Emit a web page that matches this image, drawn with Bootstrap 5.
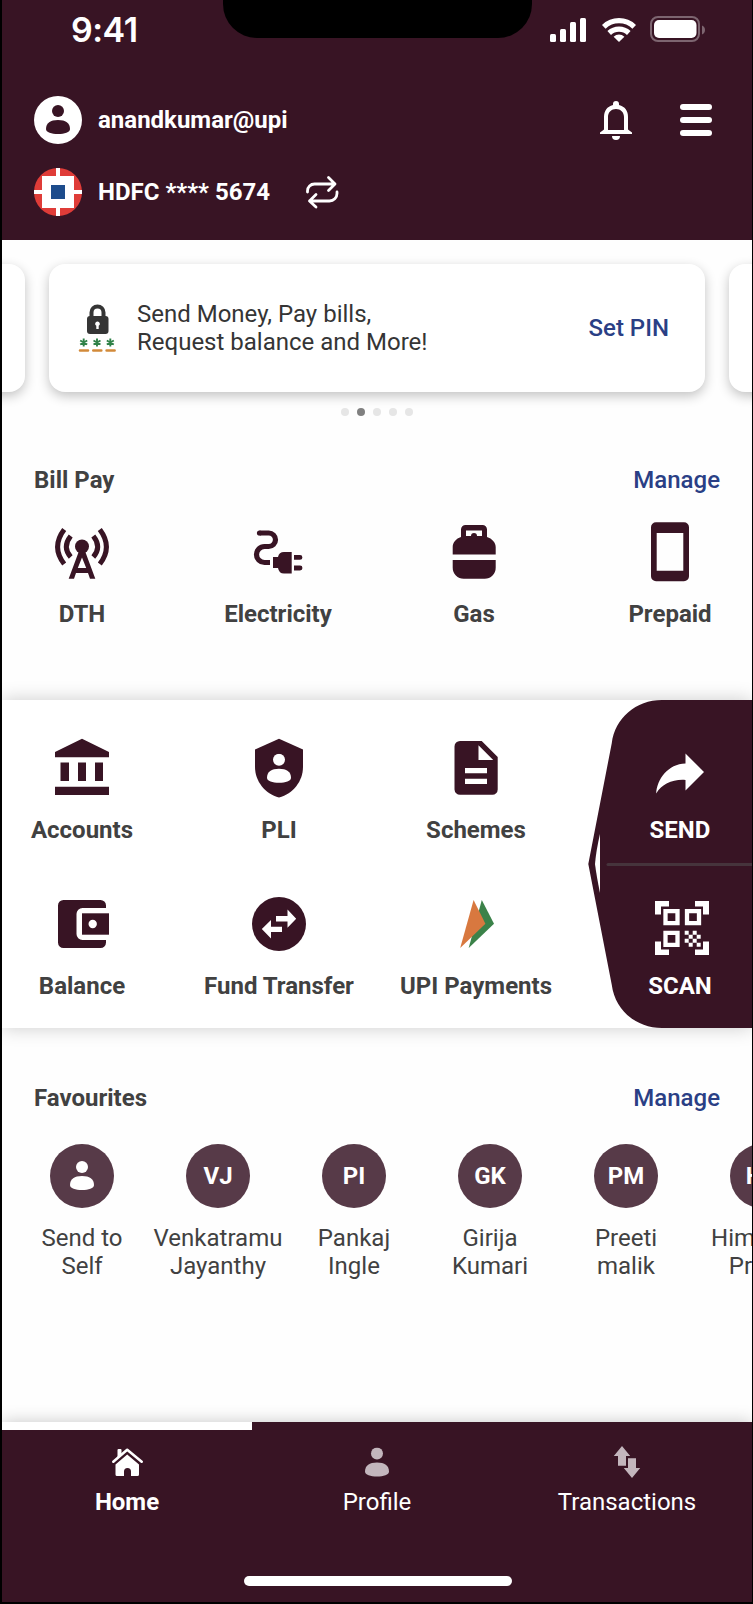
<!DOCTYPE html>
<html lang="en">
<head>
<meta charset="utf-8">
<meta name="viewport" content="width=device-width, initial-scale=1">
<title>UPI Home</title>
<link href="https://cdn.jsdelivr.net/npm/bootstrap@5.3.0/dist/css/bootstrap.min.css" rel="stylesheet">
<style>
:root{--plum:#381424;--ink:#414141;--link:#2a3f85}
body{background:#000;font-family:Roboto,sans-serif;font-size:24px;line-height:28px;color:var(--ink)}
svg{display:block;flex:none}
.screen{width:750px;height:1602px;margin-left:2px;background:#fefefe}
.plum{background:var(--plum);color:#fff}
.app-head{height:240px}
.notch{left:221px;width:309px;height:38px;background:#000;border-radius:0 0 34px 34px}
.status{height:60px;padding:0 45px 0 69px}
.clock{font:600 34px/60px Inter,sans-serif;letter-spacing:-.5px}
.head-row{height:48px;padding:0 40px 0 32px}
.fw-b{font-weight:700}
.deck{margin:24px -631px 0 -633px;gap:24px}
.promo{width:656px;height:128px;border:0;border-radius:16px;box-shadow:0 4px 12px rgba(0,0,0,.24);flex:none;color:#353535;padding:0 36px 0 26px}
.dots{height:8px;margin-top:16px}
.dots i{width:8px;height:8px;border-radius:50%;background:#e6e6e6}
.dots i.on{background:#808080}
.sec-head{padding:0 32px}
.go{color:var(--link);font-weight:500;text-decoration:none}
.cell{width:152px;flex:none;font-weight:700;white-space:nowrap}
.cell svg{margin-bottom:12px}
.bill{padding:0 4px;gap:44px;margin-top:22px}
.panel{height:328px;margin-top:72px;background:#fff;box-shadow:0 0 18px rgba(0,0,0,.2)}
.tiles{display:grid;grid-template-columns:repeat(3,152px);gap:44px 45px;padding:32px 0 0 4px}
.wing{right:0;top:0;width:166px;height:328px;color:#fff}
.wing-shape{left:0;top:0}
.wing .cell{width:144px}
.wing-items{padding:32px 0 0 22px;gap:44px}
.favs{margin:32px 0 0 12px}
.fav{width:136px;flex:none}
.ava{width:64px;height:64px;background:#573a48;color:#fff;font-weight:700;margin-bottom:16px}
.tabs{height:180px;box-shadow:0 0 16px rgba(0,0,0,.22)}
.tab{width:250px;height:104px;border-top:8px solid transparent;padding-top:14px;color:#fff;text-decoration:none}
.tab svg{margin-bottom:8px}
.tab.on{border-color:#fff;font-weight:700}
.pill{width:268px;height:10px;border-radius:5px;background:#fff;margin:50px 0 0 242px}
</style>
</head>
<body>
<svg width="0" height="0" class="position-absolute"><defs>
<symbol id="person" viewBox="0 0 24 30"><circle cx="12" cy="6" r="6"/><path d="M0 24C0 18 4.500 15 12 15S24 18 24 24C24 27.500 18.500 29 12 29S0 27.500 0 24Z"/></symbol>
</defs></svg>
<div class="screen d-flex flex-column overflow-hidden position-relative">
  <header class="app-head plum flex-shrink-0 position-relative">
    <div class="notch position-absolute top-0"></div>
    <div class="status d-flex align-items-center justify-content-between">
      <span class="clock">9:41</span>
      <svg width="158" height="28" viewBox="549 16 158 28" fill="#fff">
        <rect x="550" y="34" width="6" height="8" rx="1.500"/><rect x="560" y="29" width="6" height="13" rx="1.500"/><rect x="570" y="22" width="6" height="20" rx="1.500"/><rect x="580" y="18" width="6" height="24" rx="1.500"/>
        <g fill="none" stroke="#fff" stroke-width="5.200"><path d="M603.800 26.800a22 22 0 0 1 30.400 0"/><path d="M609.200 33a14.200 14.200 0 0 1 19.600 0"/></g>
        <path d="M619 42l-5.400-5.300a8 8 0 0 1 10.800 0Z"/>
        <rect x="651" y="17" width="48" height="24" rx="7" fill="none" stroke="#7d6570" stroke-width="2"/><rect x="654" y="20" width="42.500" height="18" rx="5"/><path d="M702 25.500c4 1.500 4 7.500 0 9Z" fill="#7d6570"/>
      </svg>
    </div>
    <div class="head-row d-flex align-items-center" style="margin-top:36px">
      <svg width="48" height="48" viewBox="0 0 48 48"><circle cx="24" cy="24" r="24" fill="#fff"/><use href="#person" x="12" y="9" width="24" height="30" fill="#381424"/></svg>
      <span class="fw-b ms-3">anandkumar@upi</span>
      <svg class="ms-auto" width="32" height="40" viewBox="600 100 32 40" fill="#fff"><path fill-rule="evenodd" d="M613 105v-1a3 3 0 0 1 6 0v1c6 1.500 9 6 9 12v12.500l4 3v1.500h-32v-1.500l4-3v-12.500c0-6 3-10.500 9-12ZM608 130h16v-13c0-5-3.500-8-8-8s-8 3-8 8Z"/><path d="M612 136h8a4 4 0 0 1-8 0Z"/></svg>
      <svg style="margin-left:48px" width="32" height="32" viewBox="0 0 32 32" fill="#fff"><rect width="32" height="6" rx="3"/><rect y="13" width="32" height="6" rx="3"/><rect y="26" width="32" height="6" rx="3"/></svg>
    </div>
    <div class="head-row d-flex align-items-center mt-4">
      <svg width="48" height="48" viewBox="0 0 48 48"><circle cx="24" cy="24" r="24" fill="#df3c38"/><path d="M8 8h14V0h4v8h14v14h8v4h-8v14H26v8h-4v-8H8V26H0v-4h8Z" fill="#fff"/><path d="M17 17h14v14H17Z" fill="#1d4c8c"/></svg>
      <span class="fw-b ms-3">HDFC **** 5674</span>
      <svg style="margin-left:35px" width="34" height="34" viewBox="305 175 34 34" fill="none" stroke="#fff" stroke-width="2.800" stroke-linecap="round" stroke-linejoin="round"><path d="M307.500 192v-1a7 7 0 0 1 7-7H335M328.500 177.500l6.500 6.500-6.500 6.500M337 192v1.500a7.500 7.500 0 0 1-7.500 7.500H309.500M316 194.500l-6.500 6.500 6.500 6"/></svg>
    </div>
  </header>

  <div class="deck d-flex">
    <div class="promo card"></div>
    <div class="promo card flex-row align-items-center">
      <svg width="44" height="56" viewBox="75 300 44 56"><path d="M91.500 318v-5.500a6 6 0 0 1 12 0V318" fill="none" stroke="#353535" stroke-width="4"/><rect x="87" y="316" width="21.500" height="18" rx="3" fill="#353535"/><path d="M97.500 321.500a2.300 2.300 0 0 1 1.200 4.300v3.200h-2.400v-3.200a2.300 2.300 0 0 1 1.200-4.300Z" fill="#fff"/>
        <path d="M83.700 338.500v8M80.200 340.500l7 4M87.200 340.500l-7 4M97 338.500v8M93.500 340.500l7 4M100.500 340.500l-7 4M110.300 338.500v8M106.800 340.500l7 4M113.800 340.500l-7 4" stroke="#2f8148" stroke-width="1.900"/>
        <path d="M80 350.500h8M93.300 350.500h8M106.600 350.500h8" stroke="#d28a3a" stroke-width="2.600" stroke-linecap="round"/></svg>
      <span style="margin-left:18px">Send Money, Pay bills,<br>Request balance and More!</span>
      <a class="go ms-auto" href="#">Set PIN</a>
    </div>
    <div class="promo card"></div>
  </div>
  <div class="dots d-flex justify-content-center gap-2 flex-shrink-0"><i></i><i class="on"></i><i></i><i></i><i></i></div>

  <div class="sec-head d-flex justify-content-between" style="margin-top:50px"><span class="fw-b">Bill Pay</span><a class="go" href="#">Manage</a></div>
  <div class="bill d-flex">
    <div class="cell d-flex flex-column align-items-center">
      <svg width="72" height="72" viewBox="46 516 72 72" fill="#381424"><g fill="none" stroke="#381424" stroke-width="5"><path d="M64.200 529.500Q51 547 64.200 564M99.800 529.500Q113 547 99.800 564M70.700 536Q62 547 70.700 557M93.300 536Q102 547 93.300 557"/></g><circle cx="82" cy="546.500" r="7"/><path fill-rule="evenodd" d="M79 551h6l10.300 27.700H90L88 573H76l-2 5.700h-5.300ZM82 557.500l-4.200 10.500h8.400Z"/></svg>DTH</div>
    <div class="cell d-flex flex-column align-items-center">
      <svg width="72" height="72" viewBox="242 516 72 72" fill="#381424"><path d="M259.500 533H268.750a6.750 6.750 0 0 1 0 13.500H264.500a8 8 0 0 0 0 16H270" fill="none" stroke="#381424" stroke-width="5.200"/><circle cx="259.500" cy="533" r="2.600"/><path d="M273 557h5q1-5 6-5h7.700v21.500H284q-5 0-6-5.500h-5ZM294 555h6a2.300 2.300 0 0 1 0 4.800h-6ZM294 565.500h6a2.300 2.300 0 0 1 0 4.900h-6Z"/></svg>Electricity</div>
    <div class="cell d-flex flex-column align-items-center">
      <svg width="72" height="72" viewBox="438 516 72 72" fill="#381424"><path fill-rule="evenodd" d="M461 537v-7.500a4.500 4.500 0 0 1 4.500-4.500h17a4.500 4.500 0 0 1 4.500 4.500v7.500c5 1.500 8.700 5.500 8.700 10v7.500h-43v-7.500c0-4.500 3.300-8.500 8.300-10ZM466 530.500v5.500h16v-5.500Z"/><circle cx="474" cy="536" r="3"/><path d="M452.700 560h43v7.500a11 11 0 0 1-11 11.200h-21a11 11 0 0 1-11-11.200Z"/></svg>Gas</div>
    <div class="cell d-flex flex-column align-items-center">
      <svg width="72" height="72" viewBox="634 516 72 72" fill="#381424"><path fill-rule="evenodd" d="M656 522.300h28a5 5 0 0 1 5 5v49a5 5 0 0 1-5 5h-28a5 5 0 0 1-5-5v-49a5 5 0 0 1 5-5ZM656.700 533v37.700h26.600V533Z"/></svg>Prepaid</div>
  </div>

  <section class="panel position-relative flex-shrink-0">
    <div class="tiles">
      <div class="cell d-flex flex-column align-items-center">
        <svg width="72" height="72" viewBox="46 732 72 72" fill="#381424"><path d="M82 738.700 109 752v5.300H55V752ZM60.500 762.500H69V781h-8.500ZM78 762.500h8V781h-8ZM95 762.500h8V781h-8ZM55 786.700h54v8.300H55Z"/></svg>Accounts</div>
      <div class="cell d-flex flex-column align-items-center">
        <svg width="72" height="72" viewBox="243 732 72 72" fill="#381424"><path d="M279 738.700 303 749.500V767C303 781 293 794 279 797.500 265 794 255 781 255 767V749.500Z"/><use href="#person" x="267" y="753.700" width="24" height="30" fill="#fff"/></svg>PLI</div>
      <div class="cell d-flex flex-column align-items-center">
        <svg width="72" height="72" viewBox="440 732 72 72" fill="#381424"><path d="M460 741h21.700l16 16v32.500a5.300 5.300 0 0 1-5.300 5.300H460a5.500 5.500 0 0 1-5.500-5.300v-43A5.500 5.500 0 0 1 460 741Z"/><path d="M478.500 745.300V760H493.200ZM465 768h22v5.300h-22ZM465 778.700h22v5.300h-22Z" fill="#fff"/></svg>Schemes</div>
      <div class="cell d-flex flex-column align-items-center">
        <svg width="72" height="72" viewBox="46 888 72 72" fill="#381424"><path d="M63.500 900H100.500a5.500 5.500 0 0 1 5.500 5.500V908H82.500a6 6 0 0 0-6 6V934a6 6 0 0 0 6 6H106v2.500a5.500 5.500 0 0 1-5.500 5.500h-37a5.500 5.500 0 0 1-5.500-5.500v-37a5.500 5.500 0 0 1 5.500-5.500Z"/><path d="M82 913.300h27v21.400H82Z"/><circle cx="92.700" cy="924" r="4.200" fill="#fff"/></svg>Balance</div>
      <div class="cell d-flex flex-column align-items-center">
        <svg width="72" height="72" viewBox="243 888 72 72"><circle cx="279" cy="924" r="27" fill="#381424"/><path d="M276 916h11.500v-6.500l8.700 9.200-8.700 9V921.500H276ZM282 926.700h-11V920l-9.200 9 9.200 9.500v-6.500h11Z" fill="#fff"/></svg>Fund Transfer</div>
      <div class="cell d-flex flex-column align-items-center">
        <svg width="72" height="72" viewBox="440 888 72 72"><path d="M481.800 900 494 923.700 468.700 948Z" fill="#3b8249"/><path d="M473.600 900 485.400 923.700 460.200 948Z" fill="#d8783f"/></svg>UPI Payments</div>
    </div>
    <div class="wing position-absolute">
      <svg class="wing-shape position-absolute" width="166" height="328" viewBox="586 700 166 328"><path d="M752 700H662C636 700 615 718 611.800 743L588.300 864 611.800 985C615 1010 636 1028 662 1028H752Z" fill="#381424"/><path d="M600 834V893Q596.500 876 595 864 596 851 600 834Z" fill="#fff"/><path d="M608 864.500H752" stroke="#46343c" stroke-width="3" stroke-linecap="round"/></svg>
      <div class="wing-items position-relative d-flex flex-column">
        <div class="cell d-flex flex-column align-items-center">
          <svg width="72" height="72" viewBox="644 732 72 72" fill="#fff"><path d="M685.500 753.500 704 772 685.500 790.500V780C673 779 662 784 656.200 793.500 657 779 668 764 685.500 763.500Z"/></svg>SEND</div>
        <div class="cell d-flex flex-column align-items-center">
          <svg width="72" height="72" viewBox="644 888 72 72" fill="#fff"><path d="M655 901h14v5.500h-8v8h-6ZM709 901h-14v5.500h8v8h6ZM655 955h14v-5.500h-8v-8h-6ZM709 955h-14v-5.500h8v-8h6Z"/><g fill="none" stroke="#fff" stroke-width="4.300"><path d="M665.500 911.200h12v12h-12ZM687 911.200h12v12h-12ZM665.500 932.900h12v12h-12Z"/></g><path d="M684.700 930.700h4v4h-4ZM692.700 930.700h4v4h-4ZM688.700 934.700h4v4h-4ZM696.700 934.700h4v4h-4ZM684.700 938.700h4v4h-4ZM692.700 938.700h4v4h-4ZM688.700 942.700h4v4h-4ZM696.700 942.700h4v4h-4Z"/></svg>SCAN</div>
      </div>
    </div>
  </section>

  <div class="sec-head d-flex justify-content-between" style="margin-top:56px"><span class="fw-b">Favourites</span><a class="go" href="#">Manage</a></div>
  <div class="favs d-flex text-center">
    <div class="fav d-flex flex-column align-items-center"><div class="ava rounded-circle d-flex align-items-center justify-content-center"><svg width="24" height="30" fill="#fff"><use href="#person" width="24" height="30"/></svg></div>Send to<br>Self</div>
    <div class="fav d-flex flex-column align-items-center"><div class="ava rounded-circle d-flex align-items-center justify-content-center">VJ</div>Venkatramu<br>Jayanthy</div>
    <div class="fav d-flex flex-column align-items-center"><div class="ava rounded-circle d-flex align-items-center justify-content-center">PI</div>Pankaj<br>Ingle</div>
    <div class="fav d-flex flex-column align-items-center"><div class="ava rounded-circle d-flex align-items-center justify-content-center">GK</div>Girija<br>Kumari</div>
    <div class="fav d-flex flex-column align-items-center"><div class="ava rounded-circle d-flex align-items-center justify-content-center">PM</div>Preeti<br>malik</div>
    <div class="fav d-flex flex-column align-items-center"><div class="ava rounded-circle d-flex align-items-center justify-content-center">HP</div>Himanshi<br>Pravin</div>
  </div>

  <nav class="tabs plum mt-auto flex-shrink-0">
    <div class="d-flex">
      <a href="#" class="tab on d-flex flex-column align-items-center"><svg width="36" height="36" viewBox="109 1444 36 36" fill="#fff"><path d="M113.300 1461.700 127.200 1449.800 141.700 1461.700" fill="none" stroke="#fff" stroke-width="2.600" stroke-linecap="round" stroke-linejoin="round"/><path d="M117.500 1450a1 1 0 0 1 1-1h2a1 1 0 0 1 1 1v4l-4 3.500Z"/><path d="M115.500 1464.500 127.200 1454.500 139 1464.500V1474.500a1.500 1.500 0 0 1-1.500 1.500H131V1471.500a3.500 3.500 0 0 0-7 0V1476H117a1.500 1.500 0 0 1-1.500-1.500Z"/></svg>Home</a>
      <a href="#" class="tab d-flex flex-column align-items-center"><svg width="36" height="36" viewBox="359 1444 36 36" fill="#c3b6bd"><use href="#person" x="365" y="1447.500" width="24" height="30"/></svg>Profile</a>
      <a href="#" class="tab d-flex flex-column align-items-center"><svg width="36" height="36" viewBox="609 1444 36 36" fill="#c3b6bd"><path d="M622 1446l8.200 10H626v9.700h-8V1456h-4.200ZM632 1478l-8.200-10H628v-9.700h8V1468h4.200Z"/></svg>Transactions</a>
    </div>
    <div class="pill"></div>
  </nav>
</div>
<script src="https://cdn.jsdelivr.net/npm/bootstrap@5.3.0/dist/js/bootstrap.bundle.min.js"></script>
</body>
</html>
